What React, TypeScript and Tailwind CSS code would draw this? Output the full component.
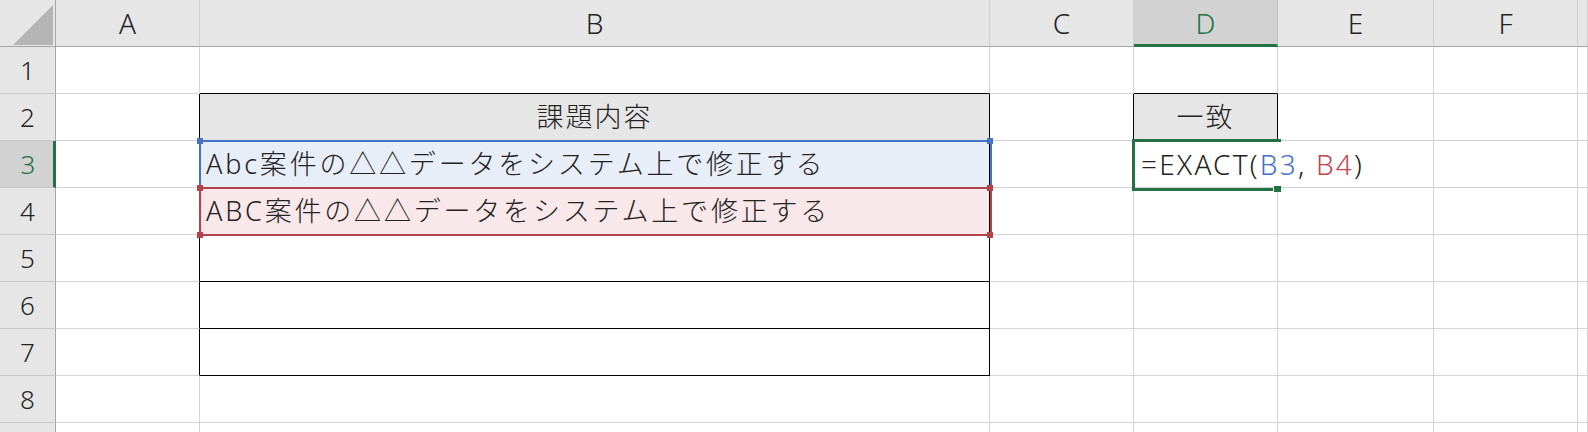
import React from "react";

const font = { fontFamily: '"Noto Sans", "Noto Sans CJK JP", sans-serif' };

type CellProps = { className: string; children?: React.ReactNode };

function Cell({ className, children }: CellProps) {
  return <div className={`relative flex items-center ${className}`}>{children}</div>;
}

const grid = "border-r border-b border-[#d4d4d4] bg-white";

export default function App() {
  const colHeads = ["A", "B", "C", "D", "E", "F", ""];
  const rows = [1, 2, 3, 4, 5, 6, 7, 8, 9];

  return (
    <div className="relative h-[432px] w-[1588px] overflow-hidden bg-white font-light text-[#222]" style={font}>
      <div className="grid grid-cols-[56px_144px_790px_144px_144px_156px_144px_1fr] grid-rows-[47px_repeat(9,47px)]">
        {/* corner */}
        <div className="relative border-r border-b border-[#a6a6a6] bg-[#e6e6e6]">
          <svg className="absolute left-[13px] top-[5px]" width="40" height="40" viewBox="0 0 40 40">
            <polygon points="40,0 40,40 0,40" fill="#b5b5b5" />
          </svg>
        </div>

        {/* column headers */}
        {colHeads.map((c) =>
          c === "D" ? (
            <div
              key={c}
              className="flex items-center justify-center border-r border-r-[#bdbdbd] border-b-[3px] border-b-[#217346] bg-[#d2d2d2] pt-[2px] text-[28px] text-[#217346]"
            >
              {c}
            </div>
          ) : (
            <div
              key={c || "g"}
              className="flex items-center justify-center border-r border-r-[#cfcfcf] border-b border-b-[#a6a6a6] bg-[#e6e6e6] text-[28px]"
            >
              {c}
            </div>
          )
        )}

        {rows.map((r) => (
          <React.Fragment key={r}>
            {/* row header */}
            {r === 3 ? (
              <div className="flex items-center justify-center border-r-[3px] border-r-[#217346] border-b border-b-[#c8c8c8] bg-[#d2d2d2] pl-[3px] text-[26px] text-[#217346]">
                {r}
              </div>
            ) : (
              <div className="flex items-center justify-center border-r border-r-[#a6a6a6] border-b border-b-[#c8c8c8] bg-[#e6e6e6] text-[26px]">
                {r < 9 ? r : ""}
              </div>
            )}

            {/* A */}
            <Cell
              className={
                r >= 2 && r <= 7
                  ? "border-r border-r-black border-b border-b-[#d4d4d4] bg-white"
                  : grid
              }
            />

            {/* B */}
            {r === 1 && <Cell className="border-r border-r-[#d4d4d4] border-b border-b-black bg-white" />}
            {r === 2 && (
              <Cell className="justify-center border-r border-b border-black bg-[#e7e6e6] text-[27px] tracking-[2px]">
                課題内容
              </Cell>
            )}
            {r === 3 && (
              <Cell className="border-r border-b border-black bg-[#e8eef8] pl-[6px] text-[27px] tracking-[2.8px]">
                Abc案件の△△データをシステム上で修正する
              </Cell>
            )}
            {r === 4 && (
              <Cell className="border-r border-b border-black bg-[#f9e8e9] pl-[6px] text-[27px] tracking-[2.8px]">
                ABC案件の△△データをシステム上で修正する
              </Cell>
            )}
            {r >= 5 && r <= 7 && <Cell className="border-r border-b border-black bg-white" />}
            {r >= 8 && <Cell className={grid} />}

            {/* C */}
            <Cell
              className={
                r === 2 ? "border-r border-r-black border-b border-b-[#d4d4d4] bg-white" : grid
              }
            />

            {/* D */}
            {r === 1 && <Cell className="border-r border-r-[#d4d4d4] border-b border-b-black bg-white" />}
            {r === 2 && (
              <Cell className="justify-center border-r border-b border-black bg-[#e7e6e6] text-[27px] tracking-[2px]">
                一致
              </Cell>
            )}
            {r === 3 && (
              <Cell className="z-10 border-b border-[#d4d4d4] bg-white pl-[7px] text-[28px] tracking-[2.2px]">
                <span className="whitespace-nowrap">
                  =EXACT(<span className="text-[#4472c4]">B3</span>,{" "}
                  <span className="text-[#c0454f]">B4</span>)
                </span>
                <span className="ml-[2px] h-[44px] w-[2px] bg-[#222]" />
              </Cell>
            )}
            {r >= 4 && <Cell className={grid} />}

            {/* E, F, G */}
            <Cell className={r === 3 ? "border-r border-b border-[#d4d4d4] bg-white" : grid} />
            <Cell className={grid} />
            <Cell className={grid} />
          </React.Fragment>
        ))}
      </div>

      {/* range highlight B3 (blue) */}
      <div className="pointer-events-none absolute left-[199px] top-[140px] h-[49px] w-[793px] border-2 border-[#4472c4]" />
      <div className="absolute left-[197px] top-[138px] h-[6px] w-[6px] bg-[#4472c4]" />
      <div className="absolute left-[987px] top-[138px] h-[6px] w-[6px] bg-[#4472c4]" />

      {/* range highlight B4 (red) */}
      <div className="pointer-events-none absolute left-[199px] top-[187px] h-[49px] w-[793px] border-2 border-[#b3424b]" />
      <div className="absolute left-[197px] top-[185px] h-[6px] w-[6px] bg-[#b3424b]" />
      <div className="absolute left-[987px] top-[185px] h-[6px] w-[6px] bg-[#b3424b]" />
      <div className="absolute left-[197px] top-[232px] h-[6px] w-[6px] bg-[#b3424b]" />
      <div className="absolute left-[987px] top-[232px] h-[6px] w-[6px] bg-[#b3424b]" />

      {/* active cell D3 */}
      <div className="pointer-events-none absolute left-[1132px] top-[139px] z-20 h-[52px] w-[149px] border-t-[3px] border-l-[3px] border-[#217346]" />
      <div className="pointer-events-none absolute left-[1132px] top-[188px] z-20 h-[3px] w-[141px] bg-[#217346]" />
      <div className="absolute left-[1274px] top-[186px] z-20 h-[6px] w-[7px] bg-[#217346]" />
    </div>
  );
}
